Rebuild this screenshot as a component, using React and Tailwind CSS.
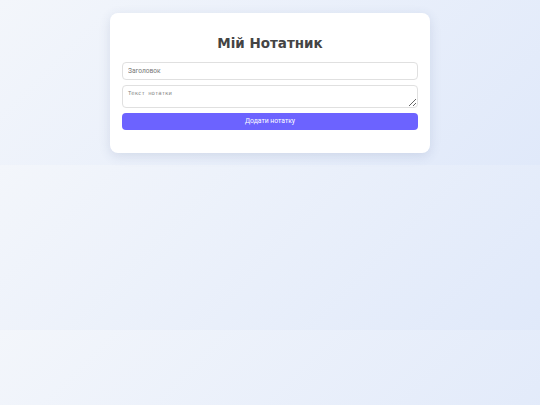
export default function App() {
  return (
    <div className="min-h-[405px] w-full bg-[linear-gradient(135deg,#f3f6fb_0%,#e0e9fa_100%)] bg-[length:100%_165px] bg-repeat pt-[13px]">
      <div className="mx-auto w-[320px] rounded-[8px] bg-white px-[12px] pt-[21px] pb-[23px] shadow-[0_3px_12px_rgba(60,80,130,0.14)]">
        <h1 className="mb-[9px] text-center font-['DejaVu_Sans',sans-serif] text-[13.5px] font-bold leading-[19px] text-[#444]">
          Мій Нотатник
        </h1>
        <div className="flex flex-col gap-[5px]">
          <input
            type="text"
            placeholder="Заголовок"
            className="h-[18px] w-full rounded-[4px] border border-[#e0e0e0] bg-white px-[5px] font-['Roboto',sans-serif] text-[6.6px] font-normal text-[#333] outline-none placeholder:text-[#777]"
          />
          <textarea
            placeholder="Текст нотатки"
            className="block h-[23px] w-full resize-y rounded-[4px] border border-[#e0e0e0] bg-white px-[5px] py-[3px] font-['DejaVu_Sans_Mono',monospace] text-[5.6px] leading-[8px] text-[#333] outline-none placeholder:text-[#888]"
          />
          <button className="h-[17px] w-full rounded-[4px] bg-[#6c63ff] font-['Roboto',sans-serif] text-[6.8px] font-normal text-white">
            Додати нотатку
          </button>
        </div>
      </div>
    </div>
  );
}
